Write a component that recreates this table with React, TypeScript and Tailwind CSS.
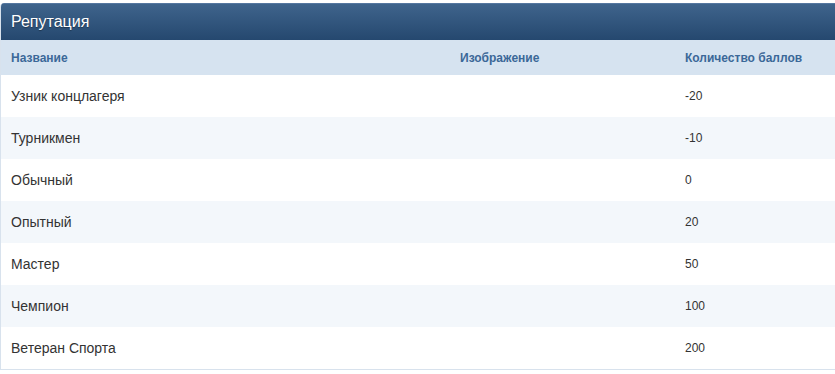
import React from 'react';

interface Rank {
  name: string;
  points: number;
}

const ranks: Rank[] = [
  { name: 'Узник концлагеря', points: -20 },
  { name: 'Турникмен', points: -10 },
  { name: 'Обычный', points: 0 },
  { name: 'Опытный', points: 20 },
  { name: 'Мастер', points: 50 },
  { name: 'Чемпион', points: 100 },
  { name: 'Ветеран Спорта', points: 200 },
];

const App: React.FC = () => {
  return (
    <div className="min-h-screen bg-white pt-[3px] font-['Liberation_Sans',Arial,sans-serif]">
      <div className="border-l border-b border-[#d8e2ed] rounded-tl-[4px] overflow-hidden">
        <div className="h-[37px] flex items-center pl-[10px] bg-gradient-to-b from-[#3f648c] to-[#25486f] border-t border-[#5577a0]">
          <h2 className="text-[16px] text-white [text-shadow:0_1px_1px_rgba(0,0,0,0.35)]">
            Репутация
          </h2>
        </div>
        <div className="h-[35px] grid grid-cols-[449px_225px_1fr] items-center px-[10px] bg-[#d6e3f0] text-[12px] font-bold text-[#3b6898]">
          <div>Название</div>
          <div>Изображение</div>
          <div>Количество баллов</div>
        </div>
        {ranks.map((rank, index) => (
          <div
            key={rank.name}
            className={`h-[42px] grid grid-cols-[449px_225px_1fr] items-center px-[10px] text-[#333] ${
              index % 2 === 1 ? 'bg-[#f3f7fb]' : 'bg-white'
            }`}
          >
            <div className="text-[14px]">{rank.name}</div>
            <div />
            <div className="text-[12px]">{rank.points}</div>
          </div>
        ))}
      </div>
    </div>
  );
};

export default App;
